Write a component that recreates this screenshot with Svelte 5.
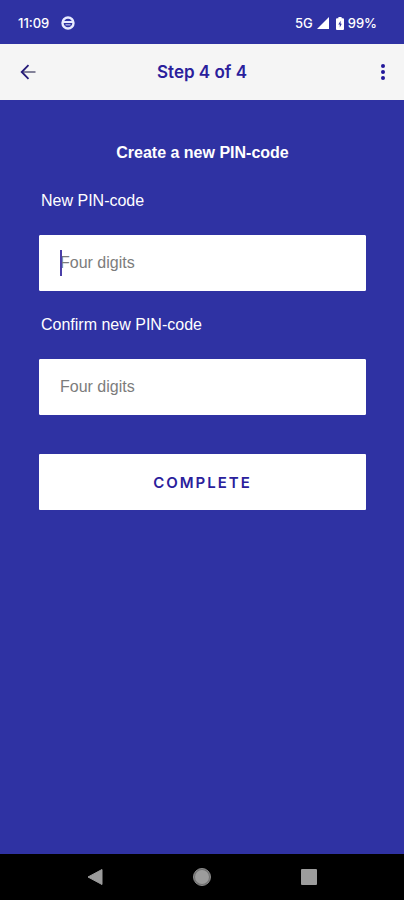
<script lang="ts">
	let fields = $state([
		{ id: 'new-pin', label: 'New PIN-code', value: '', active: true },
		{ id: 'confirm-pin', label: 'Confirm new PIN-code', value: '', active: false },
	]);
</script>

<svelte:head>
	<title>Create a new PIN-code</title>
</svelte:head>

<div class="screen">
	<div class="status">
		<div class="status-left">
			<span>11:09</span>
			<svg width="14" height="14" viewBox="0 0 14 14" aria-hidden="true">
				<circle cx="7" cy="7" r="5.5" fill="none" stroke="#e8eaff" stroke-width="2.4" />
				<path d="M1.5 6h11" stroke="#e8eaff" stroke-width="2" />
				<path d="M4.500 8.800h5" stroke="#b9bce6" stroke-width="1.200" />
			</svg>
		</div>
		<div class="status-right">
			<span>5G</span>
			<svg width="12" height="12" viewBox="0 0 12 12" aria-hidden="true">
				<path d="M12 0v12H0z" fill="#fff" />
			</svg>
			<svg class="battery" width="8" height="13" viewBox="0 0 8 13" aria-hidden="true">
				<path d="M2.400 0h3.200v1.300H7a1 1 0 0 1 1 1V12a1 1 0 0 1-1 1H1a1 1 0 0 1-1-1V2.300a1 1 0 0 1 1-1h1.400z" fill="#fff" />
				<path d="M4.600 3.800 2.300 7.600h1.500v3l2-3.900H4.600z" fill="#2f32a3" />
			</svg>
			<span>99%</span>
		</div>
	</div>

	<header>
		<button class="icon" aria-label="Back">
			<svg width="16" height="16" viewBox="0 0 16 16" aria-hidden="true">
				<path d="M2 8h13.500" stroke="#77758f" stroke-width="1.800" fill="none" />
				<path d="M8.500 1.200 1.700 8l6.800 6.800" stroke="#241a78" stroke-width="1.800" fill="none" />
			</svg>
		</button>
		<h1>Step 4 of 4</h1>
		<button class="icon more" aria-label="More options">
			<svg width="4" height="16" viewBox="0 0 4 16" fill="#22179a" aria-hidden="true">
				<circle cx="2" cy="2" r="2" />
				<circle cx="2" cy="8" r="2" />
				<circle cx="2" cy="14" r="2" />
			</svg>
		</button>
	</header>

	<main>
		<h2>Create a new PIN-code</h2>
		<form onsubmit={(e) => e.preventDefault()}>
			{#each fields as field}
				<label for={field.id}>{field.label}</label>
				<div class="field">
					<input
						id={field.id}
						type="password"
						inputmode="numeric"
						maxlength="4"
						placeholder="Four digits"
						bind:value={field.value}
					/>
					{#if field.active && !field.value}
						<span class="caret"></span>
					{/if}
				</div>
			{/each}
			<button class="complete" type="submit">COMPLETE</button>
		</form>
	</main>

	<nav>
		<button aria-label="Back">
			<svg width="20" height="20" viewBox="0 0 20 20" aria-hidden="true">
				<path d="M17 2.500v15L3 10z" fill="#9c9c9c" stroke="#9c9c9c" stroke-linejoin="round" />
			</svg>
		</button>
		<button aria-label="Home">
			<svg width="20" height="20" viewBox="0 0 20 20" aria-hidden="true">
				<circle cx="10" cy="10" r="8.500" fill="#707070" stroke="#8c8c8c" />
				<circle cx="10" cy="10" r="7" fill="#9c9c9c" />
			</svg>
		</button>
		<button aria-label="Recent apps">
			<svg width="20" height="20" viewBox="0 0 20 20" aria-hidden="true">
				<rect x="2" y="2" width="16" height="16" rx="1" fill="#9c9c9c" />
			</svg>
		</button>
	</nav>
</div>

<style>
	:global(body) { margin: 0; }

	.screen {
		display: flex; flex-direction: column;
		min-height: 100vh;
		background: #2f32a3; color: #fff;
		font-family: "Liberation Sans", Arial, sans-serif;
		font-size: 16px;
	}
	button { padding: 0; border: 0; background: none; cursor: pointer; }
	svg { display: block; }

	.status {
		display: flex; justify-content: space-between; align-items: center;
		height: 44px; padding: 2px 27px 0 18px; box-sizing: border-box;
		font-family: Inter, sans-serif; font-size: 13px; font-weight: 500;
	}
	.status-left { display: flex; align-items: center; gap: 12px; }
	.status-right { display: flex; align-items: center; gap: 4px; }
	.battery { margin-left: 3px; }

	header {
		display: flex; justify-content: space-between; align-items: center;
		height: 56px; padding: 0 8px; box-sizing: border-box;
		background: #f5f5f5;
	}
	.icon { display: flex; justify-content: center; align-items: center; width: 40px; height: 40px; }
	.more { width: 26px; margin-left: 14px; }
	h1 { margin: 0; color: #2a209c; font-family: Inter, sans-serif; font-size: 17px; font-weight: 600; }

	main { flex: 1; padding: 43px 38px 40px 39px; }
	h2 { margin: 0 0 28px; font-size: 16px; line-height: 20px; text-align: center; }
	form { display: flex; flex-direction: column; }
	label { margin: 0 2px 24px; line-height: 20px; }
	.field { position: relative; margin-bottom: 24px; }
	input {
		display: block; width: 100%; height: 56px; padding: 0 20px; box-sizing: border-box;
		border: 1px solid #fff; border-radius: 1px; background: #fff;
		color: #222; font: inherit; outline: none;
	}
	input::placeholder { color: #7c7c7c; opacity: 1; }
	.caret { position: absolute; top: 15px; left: 21px; width: 2px; height: 26px; background: #4a3fa8; }
	.complete {
		height: 56px; margin-top: 15px;
		border-radius: 1px; background: #fff; color: #2a209c;
		font-family: Inter, sans-serif; font-size: 15px; font-weight: 600; letter-spacing: 2px;
	}

	nav {
		display: flex; justify-content: center; align-items: center; gap: 87px;
		height: 46px; background: #000;
	}
</style>
